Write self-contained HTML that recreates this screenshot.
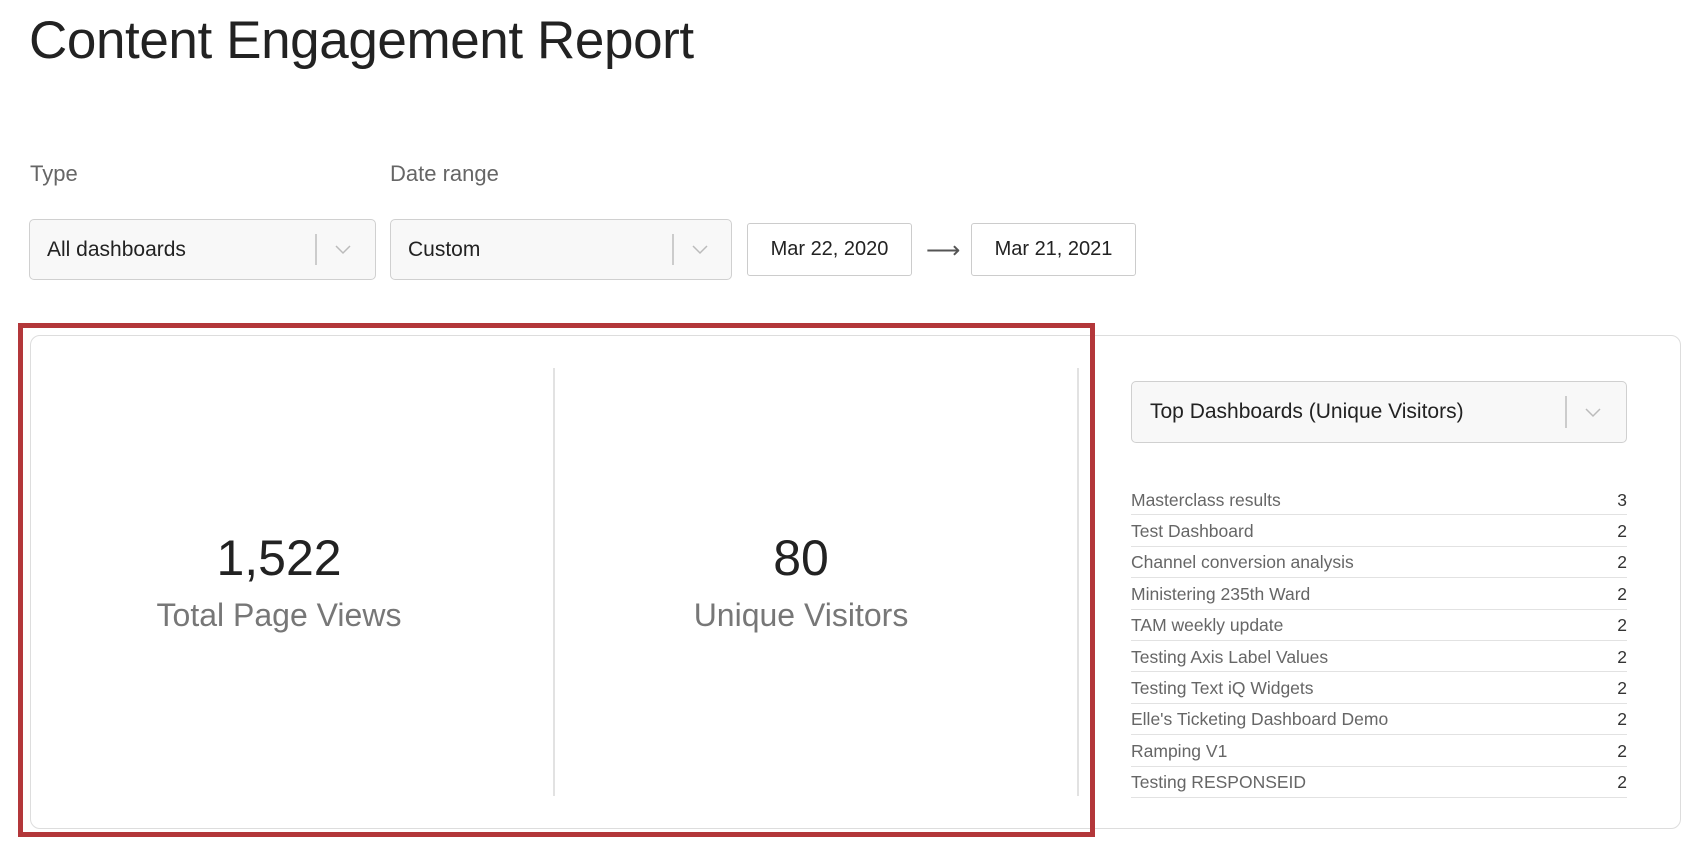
<!DOCTYPE html>
<html><head><style>
*{box-sizing:border-box;margin:0;padding:0}
body{width:1700px;height:850px;background:#fff;font-family:"Liberation Sans",sans-serif;position:relative;overflow:hidden;color:#222}
.abs{position:absolute}
h1{position:absolute;left:29px;top:10px;font-size:53px;font-weight:normal;color:#222;letter-spacing:-0.4px}
.lbl{position:absolute;font-size:22px;color:#666;top:161px}
.dd{position:absolute;background:#f8f8f8;border:1.5px solid #d0d0d0;border-radius:5px;font-size:21px;color:#222;display:flex;align-items:center;padding-left:17px}
.dd .sep{position:absolute;top:14px;bottom:14px;width:1.5px;background:#ccc}
.dd svg{position:absolute}
.date{position:absolute;border:1.5px solid #ccc;border-radius:3px;font-size:20px;display:flex;align-items:center;justify-content:center;background:#fff;top:223px;height:53px}
.card{position:absolute;left:30px;top:335px;width:1651px;height:494px;border:1.5px solid #ddd;border-radius:10px}
.red{position:absolute;left:18px;top:323px;width:1077px;height:514px;border:5px solid #b3373a}
.vl{position:absolute;top:368px;height:428px;width:1.5px;background:#e2e2e2}
.num{position:absolute;width:480px;text-align:center;font-size:50px;color:#222;top:529px}
.sub{position:absolute;width:480px;text-align:center;font-size:32px;color:#777;top:597px}
.row{position:absolute;left:1131px;width:496px;height:31.4px;border-bottom:1.5px solid #e2e2e2;font-size:17.5px;color:#666;display:flex;justify-content:space-between;align-items:center;padding-top:2px}
.row b{font-weight:normal;color:#333}
</style></head><body>
<h1>Content Engagement Report</h1>
<div class="lbl" style="left:30px">Type</div>
<div class="lbl" style="left:390px">Date range</div>
<div class="dd" style="left:29px;top:219px;width:347px;height:61px">All dashboards<div class="sep" style="left:285px"></div><svg style="left:304px;top:24px" width="18" height="12"><path d="M2 2l7 7 7-7" fill="none" stroke="#bbb" stroke-width="1.5"/></svg></div>
<div class="dd" style="left:390px;top:219px;width:342px;height:61px">Custom<div class="sep" style="left:281px"></div><svg style="left:300px;top:24px" width="18" height="12"><path d="M2 2l7 7 7-7" fill="none" stroke="#bbb" stroke-width="1.5"/></svg></div>
<div class="date" style="left:747px;width:165px">Mar 22, 2020</div>
<div class="abs" style="left:926px;top:236px;font-size:24px;color:#555">⟶</div>
<div class="date" style="left:971px;width:165px">Mar 21, 2021</div>
<div class="card"></div>
<div class="vl" style="left:553px"></div>
<div class="vl" style="left:1077px"></div>
<div class="num" style="left:39px">1,522</div>
<div class="sub" style="left:39px">Total Page Views</div>
<div class="num" style="left:561px">80</div>
<div class="sub" style="left:561px">Unique Visitors</div>
<div class="dd" style="left:1131px;top:381px;width:496px;height:62px;font-size:21px;padding-left:18px">Top Dashboards (Unique Visitors)<div class="sep" style="left:433px"></div><svg style="left:452px;top:25px" width="18" height="12"><path d="M2 2l7 7 7-7" fill="none" stroke="#bbb" stroke-width="1.5"/></svg></div>
<div class="row" style="top:484px">Masterclass results<b>3</b></div>
<div class="row" style="top:515.4px">Test Dashboard<b>2</b></div>
<div class="row" style="top:546.8px">Channel conversion analysis<b>2</b></div>
<div class="row" style="top:578.2px">Ministering 235th Ward<b>2</b></div>
<div class="row" style="top:609.6px">TAM weekly update<b>2</b></div>
<div class="row" style="top:641px">Testing Axis Label Values<b>2</b></div>
<div class="row" style="top:672.4px">Testing Text iQ Widgets<b>2</b></div>
<div class="row" style="top:703.8px">Elle's Ticketing Dashboard Demo<b>2</b></div>
<div class="row" style="top:735.2px">Ramping V1<b>2</b></div>
<div class="row" style="top:766.6px">Testing RESPONSEID<b>2</b></div>
<div class="red"></div>
</body></html>
